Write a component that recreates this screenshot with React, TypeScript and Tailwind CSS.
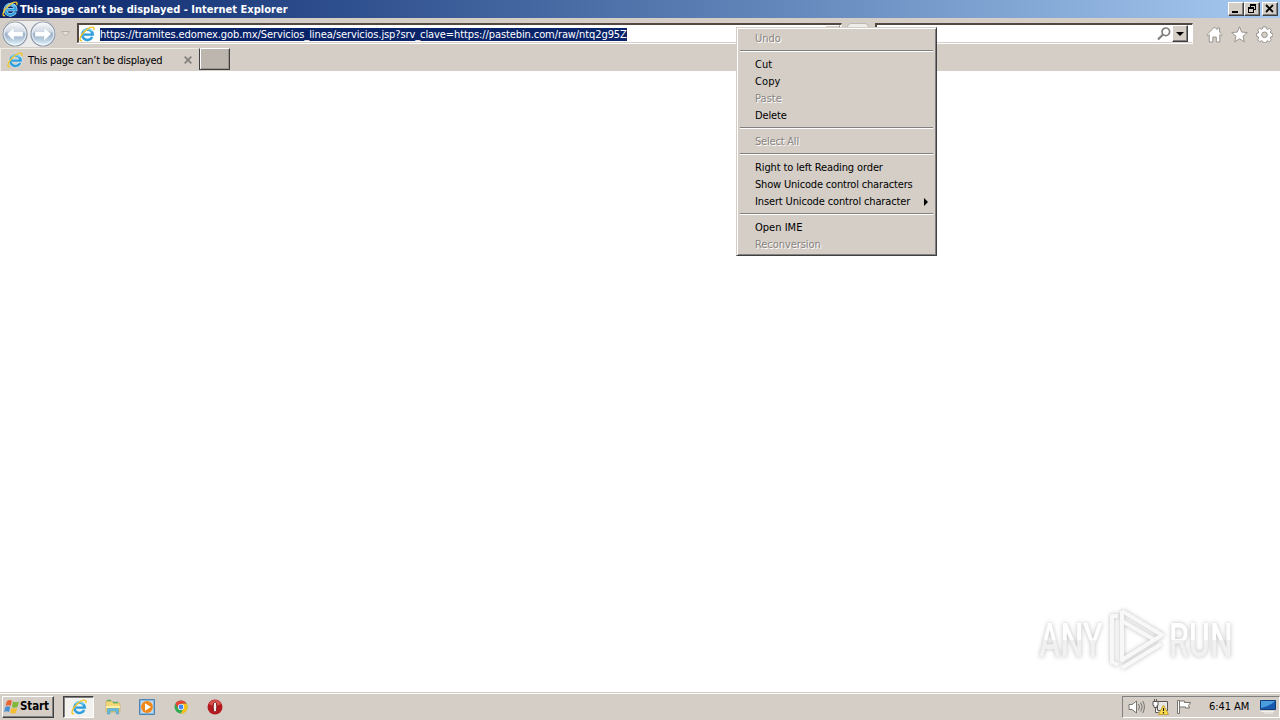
import type { ReactNode } from 'react';

type MenuEntry = { label: string; disabled?: boolean; submenu?: boolean; spacing: string } | null;

const menuEntries: MenuEntry[] = [
  { label: 'Undo', disabled: true, spacing: 'tracking-[-0.05px]' },
  null,
  { label: 'Cut', spacing: 'tracking-[0.05px]' },
  { label: 'Copy', spacing: 'tracking-[0.1px]' },
  { label: 'Paste', disabled: true, spacing: 'tracking-[0.05px]' },
  { label: 'Delete', spacing: 'tracking-[-0.15px]' },
  null,
  { label: 'Select All', disabled: true, spacing: 'tracking-[-0.2px]' },
  null,
  { label: 'Right to left Reading order', spacing: 'tracking-[-0.12px]' },
  { label: 'Show Unicode control characters', spacing: 'tracking-[-0.18px]' },
  { label: 'Insert Unicode control character', submenu: true, spacing: 'tracking-[-0.14px]' },
  null,
  { label: 'Open IME', spacing: 'tracking-[0.02px]' },
  { label: 'Reconversion', disabled: true, spacing: 'tracking-[-0.06px]' },
];

const IeIcon = ({ className = '' }: { className?: string }) => (
  <svg viewBox="0 0 16 16" className={`h-4 w-4 shrink-0 ${className}`} fill="none">
    <path d="M13.2 11A5.2 5.2 0 1 1 13.7 8.6H4.8" stroke="#d9f2fd" strokeWidth="3.4" />
    <path d="M13.2 11A5.2 5.2 0 1 1 13.7 8.6H4.8" stroke="#2f9ddb" strokeWidth="2.4" />
    <path d="M4.4 5.4A5.2 5.2 0 0 1 12.7 5.4" stroke="#72cdf3" strokeWidth="1.5" />
    <path d="M3 14.6C.2 15.4.4 11.7 3.5 7.8 7.3 2.9 12.4.2 14.4 1.4c.8.5.8 1.6.3 2.7" stroke="#f1c52e" strokeWidth="1.4" />
  </svg>
);

const RoundArrow = ({ flip = false }: { flip?: boolean }) => (
  <svg viewBox="0 0 26 26" className={`h-[26px] w-[26px] shrink-0 ${flip ? '-scale-x-100' : ''}`}>
    <defs>
      <linearGradient id="glass" x2="0" y2="1">
        <stop offset="0" stopColor="#fbfbfc" />
        <stop offset=".38" stopColor="#d3dbe5" />
        <stop offset=".5" stopColor="#9aafc6" />
        <stop offset=".75" stopColor="#bcd0e2" />
        <stop offset="1" stopColor="#e6fbff" />
      </linearGradient>
    </defs>
    <circle cx="13" cy="13" r="12" fill="url(#glass)" stroke="#8d97a3" strokeWidth="1.2" />
    <circle cx="13" cy="13" r="10.8" fill="none" stroke="#f3f8fc" strokeWidth="1.2" opacity=".7" />
    <path d="M5 13l7-6.8v4.4h9v4.8h-9v4.4z" fill="#fff" stroke="#b3c1d0" strokeWidth=".4" />
  </svg>
);

const CaptionButton = ({ children }: { children: ReactNode }) => (
  <div className="flex h-[14px] w-4 items-center justify-center border border-t-white border-l-white border-r-[#404040] border-b-[#404040] bg-[#d4cec7] shadow-[inset_-1px_-1px_#808080]">
    <svg viewBox="0 0 14 12" className="h-3 w-[14px] shrink-0" fill="none" stroke="#000" shapeRendering="crispEdges">
      {children}
    </svg>
  </div>
);

const TitleBar = () => (
  <header className="flex h-[18px] items-center bg-gradient-to-r from-[#0a246a] to-[#a6caf0] pr-[2px] pl-[2px]">
    <IeIcon />
    <h1 className="ml-[2px] grow pt-px text-[11px] leading-[17px] font-bold tracking-[0.02px] whitespace-nowrap text-white">
      This page can’t be displayed - Internet Explorer
    </h1>
    <CaptionButton><path d="M3 9h6" strokeWidth="2" /></CaptionButton>
    <CaptionButton>
      <path d="M5 2h6M5 1h6M5.5 1v3M10.5 1v6M8 6.5h3M3 5h6M3 4h6M3.5 4v6M8.5 4v6M3 9.5h6" />
    </CaptionButton>
    <div className="ml-[2px]">
      <CaptionButton><path d="M3 2l7 7M10 2L3 9" strokeWidth="1.8" shapeRendering="auto" /></CaptionButton>
    </div>
  </header>
);

const Toolbar = () => (
  <div className="flex h-[29px] items-start bg-[#d4cec7] pt-[5px]">
    <div className="mt-[-3px] ml-[2px] flex h-[27px] w-[54px] items-center gap-[2px] rounded-[13px] border-t border-[#b7b2ae] bg-[#ebebec]">
      <RoundArrow />
      <RoundArrow flip />
    </div>
    <svg viewBox="0 0 9 6" className="mt-2 ml-[5px] h-[6px] w-[9px]"><path d="M.5.5h8l-4 4.5z" fill="#e5e2dd" stroke="#b5b0aa" /></svg>
    <div className="ml-[7px] flex h-[20px] w-[765px] items-center border-t-2 border-r border-b border-l-2 border-t-[#514942] border-r-[#eeeae4] border-b-[#d4cec7] border-l-[#514942] bg-white shadow-[0_1px_#fff]">
      <IeIcon />
      <span className="mt-px ml-[5px] h-[13px] w-[527px] bg-[#0a246a] text-[11px] leading-[13px] tracking-[-0.095px] whitespace-nowrap text-white">
        https://tramites.edomex.gob.mx/Servicios_linea/servicios.jsp?srv_clave=https://pastebin.com/raw/ntq2g95Z
      </span>
      <div className="-mt-px mr-px ml-auto h-[17px] w-[15px] border border-t-white border-l-white border-r-[#808080] border-b-[#808080] bg-[#d4cec7]" />
    </div>
    <div className="ml-[5px] h-[19px] w-[22px] rounded-sm border border-[#bdb8b2] bg-[#eeece9]" />
    <div className="ml-[6px] flex h-[20px] w-[318px] items-center justify-end border-t-2 border-r border-b border-l-2 border-t-[#514942] border-r-white border-b-[#d4cec7] border-l-[#514942] bg-white pr-1 shadow-[0_1px_#fff]">
      <svg viewBox="0 0 14 14" className="mr-px h-[14px] w-[14px]" fill="none" stroke="#817d79" strokeWidth="1.7">
        <circle cx="8.8" cy="4.8" r="3.8" /><path d="M6 7.6L1 12.5" strokeWidth="2.1" />
      </svg>
      <div className="flex h-[17px] w-4 items-center justify-center border border-t-white border-l-white border-r-[#404040] border-b-[#404040] bg-[#d4cec7] shadow-[inset_-1px_-1px_#808080]">
        <svg viewBox="0 0 8 4" className="h-1 w-2"><path d="M0 0h8L4 4z" /></svg>
      </div>
    </div>
    <div className="mt-[3px] ml-[13px] flex gap-2">
      <svg viewBox="0 0 17 17" className="h-[17px] w-[17px]" fill="#fff" stroke="#99948f">
        <path d="M.8 8.8L8.5 1l2.6 2.6V2h2.5v4.1l2.7 2.7-1.1 1.1-1.4-1.3V16h-3.5v-5H6.8v5H3.2V8.6L1.9 9.9z" />
      </svg>
      <svg viewBox="0 0 17 17" className="h-[17px] w-[17px]" fill="#fff" stroke="#99948f">
        <path d="M8.5.8l2.2 5.3 5.6.4-4.3 3.7 1.3 5.6-4.8-3-4.8 3L5 10.2.7 6.5l5.6-.4z" />
      </svg>
      <svg viewBox="0 0 17 17" className="h-[17px] w-[17px]" fill="#fff" stroke="#99948f">
        <path d="M7 .8h3l.4 2 1.3.5 1.7-1.1 2 2-1 1.8.5 1.2 1.9.3v2.9l-2 .4-.5 1.3 1.1 1.7-2 2-1.7-1-1.3.5-.4 1.5H7l-.4-1.6-1.3-.5-1.7 1.1-2-2 1.1-1.7-.5-1.3-1.8-.4V7.5l1.9-.4.4-1.2-1.1-1.8 2-2 1.8 1.2 1.2-.5z" />
        <circle cx="8.5" cy="8.8" r="2.8" fill="#d4cec7" />
      </svg>
    </div>
  </div>
);

const TabRow = () => (
  <div className="flex h-6 bg-[#d4cec7]">
    <div className="mt-px flex h-[23px] w-[198px] items-center border-t border-l border-[#efede8] pl-[6px]">
      <IeIcon />
      <span className="ml-[5px] w-[156px] text-[11px] leading-[15px] tracking-[-0.28px] whitespace-nowrap">This page can’t be displayed</span>
      <svg viewBox="0 0 8 8" className="h-2 w-2 shrink-0" stroke="#85817b" strokeWidth="1.8"><path d="M.7.7l6.6 6.6M7.3.7L.7 7.3" /></svg>
    </div>
    <div className="mt-px ml-px h-[22px] w-[31px] border border-t-white border-r-[#404040] border-b-[#404040] border-l-[#404040] bg-[#bcb6af] shadow-[inset_1px_0_#fff,inset_-1px_-1px_#99938c]" />
  </div>
);

const ContextMenu = () => (
  <div className="absolute top-[27px] left-[736px] h-[229px] w-[201px] border border-t-[#d4cec7] border-l-[#d4cec7] border-r-[#404040] border-b-[#404040] bg-[#d4cec7] p-[2px] shadow-[inset_1px_1px_#fff,inset_-1px_-1px_#808080]">
    {menuEntries.map((entry, i) =>
      entry ? (
        <div
          key={entry.label}
          className={`flex h-[17px] items-center pl-4 text-[11px] leading-[17px] whitespace-nowrap ${entry.spacing} ${entry.disabled ? 'text-[#88847f] [text-shadow:1px_1px_#fff]' : 'text-black'}`}
        >
          <span className="w-[169px]">{entry.label}</span>
          {entry.submenu && <svg viewBox="0 0 4 8" className="h-2 w-1"><path d="M0 0l4 4-4 4z" /></svg>}
        </div>
      ) : (
        <div key={i} className="flex h-[9px] flex-col pt-[3px]">
          <div className="mx-px h-px bg-[#808080]" />
          <div className="mx-px h-px bg-white" />
        </div>
      )
    )}
  </div>
);

const Watermark = () => (
  <div className="absolute top-[608px] left-[1039px] flex h-16 w-[194px] items-center justify-between font-['Roboto'] text-[49px] leading-none [filter:drop-shadow(0_0_2px_#bdbdbd)]">
    <div className="w-[66px]"><span className="inline-block origin-left scale-x-[.66] bg-gradient-to-b from-white from-50% to-[#f1f1f1] to-50% bg-clip-text font-medium text-transparent">ANY</span></div>
    <svg viewBox="0 0 58 64" className="h-16 w-[58px] shrink-0" fill="none" stroke="#f8f8f8" strokeWidth="4" strokeLinejoin="round">
      <path d="M10 8H4v46l6 3M14 3v45M14 3l40 24-40 25v-9M14 13l31 18M14 60l39-24" />
    </svg>
    <div className="w-[64px]"><span className="inline-block origin-left scale-x-[.65] bg-gradient-to-b from-white from-50% to-[#f1f1f1] to-50% bg-clip-text font-medium text-transparent">RUN</span></div>
  </div>
);

const Taskbar = () => (
  <footer className="flex h-7 items-start border-t border-[#d4cec7] bg-[#d4cec7] pt-[3px] pl-[2px] shadow-[inset_0_1px_#fff]">
    <button className="flex h-[22px] w-[52px] items-center border border-t-white border-l-white border-r-[#404040] border-b-[#404040] pl-px text-[11.5px] font-bold tracking-[-0.1px] shadow-[inset_-1px_-1px_#808080]">
      <svg viewBox="0 0 16 16" className="h-4 w-4 shrink-0">
        <path d="M3 2q3-2 5 0L6.5 7Q4 5.5 1.5 7z" fill="#e96532" />
        <path d="M9 2.5q3 1.6 6 0L13.5 8q-3 1.4-5.6 0z" fill="#80b83b" />
        <path d="M1.3 8q2.6-1.6 5 .1L5 13q-2.6-1.6-5 0z" fill="#4a8fd0" />
        <path d="M7.5 8.8q2.8 1.5 5.7.1L11.7 14q-2.8 1.2-5.5-.2z" fill="#f4bd32" />
      </svg>
      Start
    </button>
    <div className="ml-[9px] flex h-[22px] w-[31px] items-center justify-center border border-t-[#404040] border-l-[#404040] border-r-white border-b-white bg-[#f3f2ef] shadow-[inset_1px_1px_#808080]">
      <IeIcon />
    </div>
    <div className="mt-[3px] ml-[11px] flex gap-[18px]">
      <svg viewBox="0 0 16 16" className="h-4 w-4">
        <path d="M1 2h6l1 2h7v9H1z" fill="#f4d777" stroke="#c5a758" strokeWidth=".6" />
        <path d="M2 1.5h4M8 3.5h5" stroke="#64ac69" strokeWidth="1.5" />
        <path d="M1 7h14v2H1z" fill="#fff0a9" />
        <path d="M2.5 15V9.5h11V15h-2.3v-3H5v3z" fill="#64bce0" stroke="#4597bf" strokeWidth=".5" />
      </svg>
      <svg viewBox="0 0 16 16" className="h-4 w-4">
        <path d="M.5.5h15v15H.5z" fill="#8ab8dd" stroke="#4d84b7" />
        <path d="M2 2h12v12H2z" fill="#c7dced" />
        <circle cx="8" cy="8" r="5.9" fill="#f18716" /><path d="M6 4.2L12 8l-6 3.8z" fill="#fff" />
      </svg>
      <svg viewBox="0 0 16 16" className="h-4 w-4">
        <circle cx="8" cy="8" r="6.5" fill="#36a853" />
        <path d="M2.4 4.7A6.5 6.5 0 0 1 13.6 4.7H8L5.2 9.6z" fill="#e64235" />
        <path d="M13.6 4.7A6.5 6.5 0 0 1 7.6 14.5L10.8 9.6 8 4.7z" fill="#fbc116" />
        <circle cx="8" cy="8" r="3.1" fill="#fff" /><circle cx="8" cy="8" r="2.4" fill="#4285f4" />
      </svg>
      <svg viewBox="0 0 16 16" className="h-4 w-4">
        <circle cx="8" cy="8" r="7.5" fill="#b51a1e" />
        <path d="M2 5a6.5 6.5 0 0 1 12 0q-6 4-12 0z" fill="#d9524f" />
        <ellipse cx="8" cy="8" rx="1.9" ry="5.2" fill="#f7eeee" stroke="#7e1518" />
      </svg>
    </div>
    <div className="ml-auto flex h-[22px] w-[158px] items-center border border-t-[#808080] border-l-[#808080] border-r-white border-b-white pl-[5px]">
      <svg viewBox="0 0 17 16" className="h-4 w-[17px] shrink-0" fill="none" stroke="#77736e">
        <path d="M1 5.5h3L8.5 2v12L4 10.5H1z" fill="#fff" /><path d="M10.5 5q2 3 0 6M12.7 3.5q3 4.5 0 9M14.8 2q3.2 6 0 12" />
      </svg>
      <svg viewBox="0 0 17 16" className="ml-[7px] h-4 w-[17px] shrink-0" fill="none" stroke="#5c5955">
        <path d="M5.5 2.5h10v9h-10zM7 14.5h6" fill="#e8e7e4" />
        <path d="M1 2.5h5v4H5v2H2v-2H1zM2.5 0v2.5M4.5 0v2.5M3.5 8.5v5h3" fill="#fff" />
        <path d="M11.5 6l5 9.5h-10z" fill="#ffdc48" stroke="#b48e1d" strokeWidth=".7" /><path d="M11.5 9v3M11.5 13v1.4" stroke="#222" strokeWidth="1.2" />
      </svg>
      <svg viewBox="0 0 16 16" className="ml-[7px] h-4 w-4 shrink-0" fill="#fff" stroke="#77736e">
        <path d="M1.5 1.5h2v13h-2z" /><path d="M3.5 2h5v1.5h6l-2 3 1 2.5h-4V8h-6z" />
      </svg>
      <span className="ml-[17px] w-[42px] text-[11px] tracking-[-0.05px] whitespace-nowrap">6:41 AM</span>
      <svg viewBox="0 0 16 14" className="ml-[9px] h-[14px] w-4 shrink-0">
        <path d="M.5.5h15v9H.5z" fill="#1759ad" stroke="#133e79" /><path d="M1 8Q9 7 15 1H1z" fill="#4a9ee0" />
        <path d="M1 11.5h13M4 13h9" stroke="#f2f2f2" />
      </svg>
    </div>
  </footer>
);

export default function App() {
  return (
    <div className="relative flex h-[720px] w-[1280px] flex-col overflow-hidden bg-white font-['DejaVu_Sans_Condensed','DejaVu_Sans',sans-serif] text-black">
      <TitleBar />
      <Toolbar />
      <TabRow />
      <main className="grow bg-white" />
      <Taskbar />
      <Watermark />
      <ContextMenu />
    </div>
  );
}
